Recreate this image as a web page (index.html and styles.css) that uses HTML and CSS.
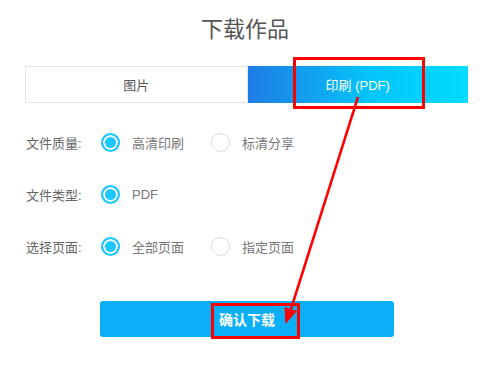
FILE: index.html
```html
<!DOCTYPE html>
<html lang="zh-CN">
<head>
    <meta charset="UTF-8">
    <title>下载作品</title>
    <link rel="stylesheet" href="styles.css">
</head>
<body>
    <div class="page">
        <h1 class="title">下载作品</h1>

        <div class="tabs">
            <div class="tab">图片</div>
            <div class="tab active">印刷 (PDF)</div>
        </div>

        <div class="form">
            <div class="row">
                <span class="label">文件质量:</span>
                <label class="option"><i class="radio checked"></i>高清印刷</label>
                <label class="option"><i class="radio"></i>标清分享</label>
            </div>
            <div class="row">
                <span class="label">文件类型:</span>
                <label class="option"><i class="radio checked"></i>PDF</label>
            </div>
            <div class="row">
                <span class="label">选择页面:</span>
                <label class="option"><i class="radio checked"></i>全部页面</label>
                <label class="option"><i class="radio"></i>指定页面</label>
            </div>
        </div>

        <button class="submit">确认下载</button>

        <svg class="marks" width="485" height="372" viewBox="0 0 485 372">
            <rect x="294.5" y="58.5" width="129" height="49" fill="none" stroke="#f00" stroke-width="3"/>
            <rect x="212.5" y="304.5" width="86" height="33" fill="none" stroke="#f00" stroke-width="3"/>
            <line x1="358" y1="97" x2="291" y2="309" stroke="#f00" stroke-width="2.5"/>
            <polygon points="285.5,324 284.5,307 297,311" fill="#f00"/>
        </svg>
    </div>
</body>
</html>
```

FILE: styles.css
```css
* {
    margin: 0;
    padding: 0;
    box-sizing: border-box;
}

body {
    width: 485px;
    height: 372px;
    background: #fff;
    font-family: "Liberation Sans", "Noto Sans CJK SC", sans-serif;
    color: #666;
    overflow: hidden;
}

.page {
    position: relative;
    height: 100%;
    display: flex;
    flex-direction: column;
}

.title {
    margin: 15px 0 0 5px;
    text-align: center;
    font-size: 22px;
    line-height: 30px;
    font-weight: normal;
    color: #555;
}

.tabs {
    display: flex;
    width: 443px;
    height: 37px;
    margin: 21px 0 0 25px;
}

.tab {
    flex: 1;
    display: flex;
    justify-content: center;
    align-items: center;
    font-size: 13px;
    color: #555;
    border: 1px solid #e3e3e3;
}

.tab.active {
    color: #fff;
    border: none;
    background: linear-gradient(to right, #1f7ce6, #04c4f8 55%, #00dcff);
}

.form {
    display: flex;
    flex-direction: column;
    gap: 32px;
    margin: 29px 0 0 26px;
}

.row {
    display: flex;
    align-items: center;
    height: 20px;
    font-size: 13px;
}

.label {
    width: 75px;
}

.option {
    display: flex;
    align-items: center;
    gap: 12px;
    min-width: 110px;
    color: #777;
}

.radio {
    width: 19px;
    height: 19px;
    border-radius: 50%;
    border: 1.5px solid #dcdcdc;
}

.radio.checked {
    border: 2px solid #1cc6ff;
    background: #1cc6ff;
    box-shadow: inset 0 0 0 2px #fff;
}

.submit {
    width: 294px;
    height: 36px;
    margin: 45px 0 0 100px;
    border: none;
    border-radius: 3px;
    background: #0aaff8;
    color: #fff;
    font-family: inherit;
    font-size: 14px;
    font-weight: bold;
}

.marks {
    position: absolute;
    top: 0;
    left: 0;
    pointer-events: none;
}
```
